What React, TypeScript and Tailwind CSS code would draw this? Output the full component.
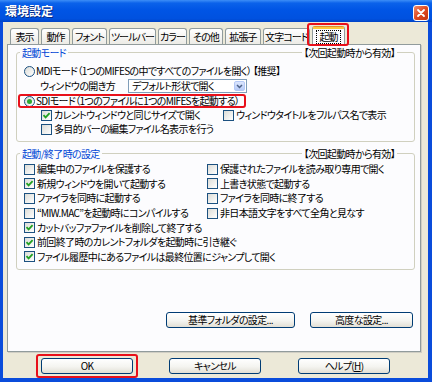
import type { ReactNode } from "react";

const tabs = [
  { label: "表示", w: "w-[29px]" },
  { label: "動作", w: "w-[29px]" },
  { label: "フォント", w: "w-[35px]" },
  { label: "ツールバー", w: "w-[47px]" },
  { label: "カラー", w: "w-[29px]" },
  { label: "その他", w: "w-[34px]" },
  { label: "拡張子", w: "w-[36px]" },
  { label: "文字コード", w: "w-[47px]" },
];

const startupRows: [string, boolean, string | null][] = [
  ["編集中のファイルを保護する", false, "保護されたファイルを読み取り専用で開く"],
  ["新規ウィンドウを開いて起動する", true, "上書き状態で起動する"],
  ["ファイラを同時に起動する", false, "ファイラを同時に終了する"],
  ["“MIW.MAC”を起動時にコンパイルする", false, "非日本語文字をすべて全角と見なす"],
  ["カットバッファファイルを削除して終了する", true, null],
  ["前回終了時のカレントフォルダを起動時に引き継ぐ", true, null],
  ["ファイル履歴中にあるファイルは最終位置にジャンプして開く", true, null],
];

function Check({ on }: { on?: boolean }) {
  return (
    <span className="w-[11px] h-[11px] shrink-0 border border-[#1c5180] bg-[linear-gradient(135deg,#dcdcd7,#ffffff)] flex items-center justify-center">
      {on && (
        <svg width="9" height="9" viewBox="0 0 9 9">
          <path d="M1.5 4.2 L3.6 6.4 L7.6 2.1" stroke="#21a121" strokeWidth="1.8" fill="none" />
        </svg>
      )}
    </span>
  );
}

function Radio({ on }: { on?: boolean }) {
  return (
    <span className="w-[11px] h-[11px] shrink-0 rounded-full border border-[#1c5180] bg-[linear-gradient(135deg,#dcdcd7,#ffffff)] flex items-center justify-center">
      {on && <span className="w-[5px] h-[5px] rounded-full bg-[#2fa82f]" />}
    </span>
  );
}

function Group({ title, children, className }: { title: string; children: ReactNode; className: string }) {
  return (
    <div className={`ml-[8px] w-[399px] border border-[#d0d0bf] rounded-[3px] ${className}`}>
      <div className="-mt-[7px] h-[13px] flex items-center justify-between pl-[3px] pr-[17px]">
        <span className="bg-[#fcfcfe] px-[2px] text-[#0046d5]">{title}</span>
        <span className="bg-[#fcfcfe] px-[2px]">【次回起動時から有効】</span>
      </div>
      {children}
    </div>
  );
}

function Btn({ children, w }: { children: ReactNode; w: string }) {
  return (
    <div className={`${w} h-[16px] border border-[#003c74] rounded-[3px] bg-[linear-gradient(to_bottom,#ffffff,#f4f4f0_55%,#e2dfd5)] flex items-center justify-center`}>
      {children}
    </div>
  );
}

function RedMark({ className }: { className: string }) {
  return <span className={`absolute border-2 border-[#e8101a] rounded-[3px] z-20 pointer-events-none ${className}`} />;
}

export default function App() {
  return (
    <div className="w-[432px] h-[382px] bg-[#0a4cdb] flex flex-col font-['Noto_Sans_CJK_JP','Noto_Sans_CJK_SC',sans-serif] [font-feature-settings:'palt'] text-[10px] tracking-[-0.65px] leading-none text-black overflow-hidden whitespace-nowrap">
      {/* title bar */}
      <div className="h-[22px] shrink-0 flex justify-between items-center pl-[5px] pr-[3px] bg-[linear-gradient(to_bottom,#3d8ef7_0%,#0b62ea_14%,#0055e5_45%,#0051df_85%,#0043c6_100%)]">
        <span className="text-white text-[12px] font-bold tracking-normal [text-shadow:1px_1px_0_#0a2a80]">環境設定</span>
        <div className="self-end mb-[1px] w-[16px] h-[16px] rounded-[3px] border border-white bg-[linear-gradient(135deg,#f08a6a,#e04a22_50%,#c23410)] flex items-center justify-center">
          <svg width="10" height="10" viewBox="0 0 10 10">
            <path d="M2 2 L8 8 M8 2 L2 8" stroke="white" strokeWidth="1.8" strokeLinecap="round" />
          </svg>
        </div>
      </div>

      {/* dialog body */}
      <div className="flex-1 ml-[3px] mr-[4px] mb-[4px] bg-[#ece9d8] flex flex-col">
        {/* tabs */}
        <div className="mt-[4px] ml-[7px] h-[18px] flex items-end gap-[2px] tracking-[-0.9px]">
          {tabs.map((t) => (
            <div
              key={t.label}
              className={`${t.w} h-[16px] border border-b-0 border-[#919b9c] rounded-t-[3px] bg-[linear-gradient(to_bottom,#ffffff,#ecebe6)] flex items-center justify-center`}
            >
              {t.label}
            </div>
          ))}
          <div className="relative -mb-[1px] z-10">
            <div className="w-[33px] h-[19px] border border-b-0 border-[#919b9c] border-t-[#e68b2c] rounded-t-[3px] bg-[#fcfcfe] flex flex-col">
              <span className="h-[2px] bg-[#ffc83c]" />
              <span className="flex-1 flex items-center justify-center">
                <span className="border border-dotted border-black px-[2px] py-[1px]">起動</span>
              </span>
            </div>
            <RedMark className="-top-[3px] -left-[5px] -right-[4px] -bottom-[1px]" />
          </div>
        </div>

        {/* tab panel */}
        <div className="ml-[4px] mr-[7px] h-[308px] border border-[#919b9c] bg-[#fcfcfe] flex flex-col shadow-[1px_1px_0_#d0cec4]">
          <Group title="起動モード" className="mt-[7px]">
            <div className="pt-[5px] pl-[7px] pb-[5px] flex flex-col">
              <div className="h-[14px] flex items-center gap-[1px]">
                <Radio />
                <span>MDIモード（1つのMIFESの中ですべてのファイルを開く） 【推奨】</span>
              </div>
              <div className="mt-[1px] h-[14px] flex items-center pl-[16px]">
                <span className="w-[88px]">ウィンドウの開き方</span>
                <div className="w-[119px] h-[14px] border border-[#7f9db9] bg-white flex items-center justify-between pl-[3px] pr-[1px]">
                  <span>デフォルト形状で開く</span>
                  <span className="w-[11px] h-[10px] rounded-[2px] border border-[#b5c9f6] bg-[linear-gradient(to_bottom,#dce6fd,#b7cbf8)] flex items-center justify-center">
                    <svg width="7" height="5" viewBox="0 0 7 5">
                      <path d="M1 1 L3.5 3.5 L6 1" stroke="#4d6185" strokeWidth="1.5" fill="none" />
                    </svg>
                  </span>
                </div>
              </div>
              <div className="mt-[1px] h-[14px] flex items-center">
                <div className="relative flex items-center gap-[1px]">
                  <Radio on />
                  <span>SDIモード（1つのファイルに1つのMIFESを起動する）</span>
                  <RedMark className="-top-[2px] -bottom-[1px] -left-[6px] -right-[7px]" />
                </div>
              </div>
              <div className="h-[14px] flex items-center pl-[17px]">
                <div className="w-[182px] flex items-center gap-[2px]">
                  <Check on />
                  <span>カレントウィンドウと同じサイズで開く</span>
                </div>
                <div className="flex items-center gap-[2px]">
                  <Check />
                  <span>ウィンドウタイトルをフルパス名で表示</span>
                </div>
              </div>
              <div className="h-[14px] flex items-center pl-[17px] gap-[2px]">
                <Check />
                <span>多目的バーの編集ファイル名表示を行う</span>
              </div>
            </div>
          </Group>

          <Group title="起動/終了時の設定" className="mt-[11px]">
            <div className="pt-[2px] pl-[7px] pb-[5px] flex flex-col">
              {startupRows.map(([left, on, right]) => (
                <div key={left} className="h-[14.6px] flex items-center">
                  <div className="w-[183px] shrink-0 flex items-center gap-[2px]">
                    <Check on={on} />
                    <span>{left}</span>
                  </div>
                  {right && (
                    <div className="flex items-center gap-[2px]">
                      <Check />
                      <span>{right}</span>
                    </div>
                  )}
                </div>
              ))}
            </div>
          </Group>

          <div className="mt-[42px] pr-[7px] flex justify-end gap-[15px]">
            <Btn w="w-[129px]">基準フォルダの設定...</Btn>
            <Btn w="w-[103px]">高度な設定...</Btn>
          </div>
        </div>

        {/* dialog buttons */}
        <div className="mt-[6px] pl-[38px] flex">
          <div className="relative">
            <Btn w="w-[92px]">OK</Btn>
            <RedMark className="-top-[4px] -bottom-[4px] -left-[5px] -right-[5px]" />
          </div>
          <div className="ml-[36px]">
            <Btn w="w-[92px]">キャンセル</Btn>
          </div>
          <div className="ml-[37px]">
            <Btn w="w-[92px]">
              ヘルプ(<span className="underline">H</span>)
            </Btn>
          </div>
        </div>
      </div>
    </div>
  );
}
